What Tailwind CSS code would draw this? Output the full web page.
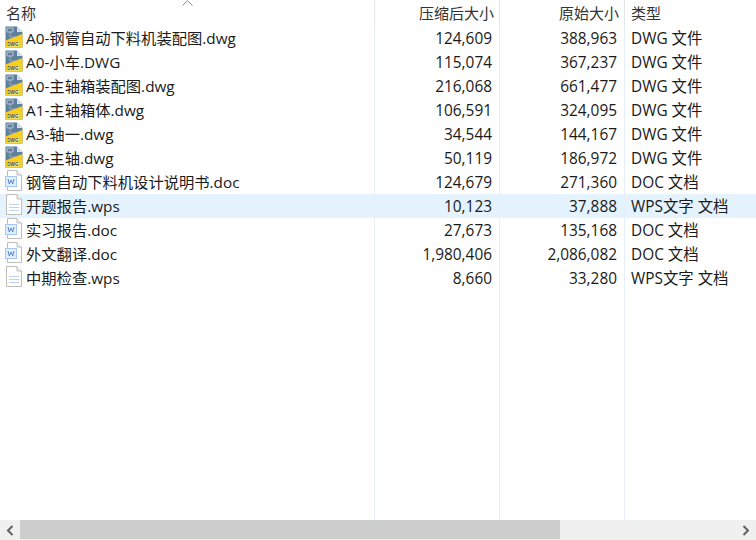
<!DOCTYPE html>
<html lang="zh">
<head>
<meta charset="utf-8">
<script src="https://cdn.jsdelivr.net/npm/@tailwindcss/browser@4"></script>
</head>
<body class="bg-white overflow-hidden">
<svg width="0" height="0" class="absolute">
  <defs>
    <symbol id="dwg" viewBox="0 0 18 22">
      <path d="M0.5 0.5H12L17.5 6V21.5H0.5Z" fill="#5f7f9e"/>
      <path d="M2 2H8V6H2Z" fill="none" stroke="#b9c9d8" stroke-width="1"/>
      <path d="M5 6V11H11" fill="none" stroke="#9fb3c6" stroke-width="1"/>
      <path d="M12 0.5L17.5 6H12Z" fill="#d5dee6"/>
      <path d="M0.5 14.5L17.5 8V21.5H0.5Z" fill="#f7cf1e"/>
      <rect x="2" y="16" width="12" height="4.5" fill="#fcee9c"/>
      <text x="2.3" y="20" font-size="4.6" font-weight="700" font-family="Liberation Sans" fill="#4a4a2a">DWG</text>
    </symbol>
    <symbol id="doc" viewBox="0 0 18 22">
      <path d="M2.5 0.5H12L16.5 5V20.5H2.5Z" fill="#fff" stroke="#bdbdbd"/>
      <path d="M12 0.5V5H16.5" fill="#f2f2f2" stroke="#bdbdbd"/>
      <rect x="0.5" y="6.5" width="11" height="10" fill="#e3eefb" stroke="#a8c6ee"/>
      <path d="M3 9L4.3 14L6 10L7.7 14L9 9" fill="none" stroke="#4d87dc" stroke-width="1"/>
    </symbol>
    <symbol id="wps" viewBox="0 0 18 22">
      <path d="M1.5 0.5H12L16.5 5V20.5H1.5Z" fill="#fff" stroke="#bdbdbd"/>
      <path d="M12 0.5V5H16.5" fill="#f2f2f2" stroke="#bdbdbd"/>
      <path d="M4 10.5H14M4 13.5H14M4 16.5H14" stroke="#bcd2f0" stroke-width="1"/>
    </symbol>
  </defs>
</svg>
<div class="relative w-[756px] h-[540px] flex flex-col font-['Open_Sans','Noto_Sans_CJK_SC',sans-serif] text-[15.4px] text-[#1a1a1a] overflow-hidden">
  <div class="flex-1 relative">
    <!-- header -->
    <div class="relative flex h-[26px] items-center leading-none text-[15px] text-[#333]">
      <svg class="absolute left-[182px] top-0" width="11" height="6" viewBox="0 0 11 6"><path d="M0.5 5.5L5.5 0.8L10.5 5.5" fill="none" stroke="#8a8a8a"/></svg>
      <div class="w-[375px] pl-[6px]">名称</div>
      <div class="w-[125px] pr-[6px] text-right">压缩后大小</div>
      <div class="w-[125px] pr-[6px] text-right">原始大小</div>
      <div class="flex-1 pl-[6px]">类型</div>
    </div>
    <!-- rows -->
    <div class="flex h-6 items-center pt-[2px]"><div class="w-[375px] flex items-center text-[15.3px] -mt-[2px]"><svg class="ml-[5px] mr-[3px] -mt-[2px]" width="18" height="22"><use href="#dwg"/></svg>A0-钢管自动下料机装配图.dwg</div><div class="w-[125px] pr-[8px] text-right">124,609</div><div class="w-[125px] pr-[8px] text-right">388,963</div><div class="flex-1 pl-[6px]">DWG 文件</div></div>
    <div class="flex h-6 items-center pt-[2px]"><div class="w-[375px] flex items-center text-[15.3px] -mt-[2px]"><svg class="ml-[5px] mr-[3px] -mt-[2px]" width="18" height="22"><use href="#dwg"/></svg>A0-小车.DWG</div><div class="w-[125px] pr-[8px] text-right">115,074</div><div class="w-[125px] pr-[8px] text-right">367,237</div><div class="flex-1 pl-[6px]">DWG 文件</div></div>
    <div class="flex h-6 items-center pt-[2px]"><div class="w-[375px] flex items-center text-[15.3px] -mt-[2px]"><svg class="ml-[5px] mr-[3px] -mt-[2px]" width="18" height="22"><use href="#dwg"/></svg>A0-主轴箱装配图.dwg</div><div class="w-[125px] pr-[8px] text-right">216,068</div><div class="w-[125px] pr-[8px] text-right">661,477</div><div class="flex-1 pl-[6px]">DWG 文件</div></div>
    <div class="flex h-6 items-center pt-[2px]"><div class="w-[375px] flex items-center text-[15.3px] -mt-[2px]"><svg class="ml-[5px] mr-[3px] -mt-[2px]" width="18" height="22"><use href="#dwg"/></svg>A1-主轴箱体.dwg</div><div class="w-[125px] pr-[8px] text-right">106,591</div><div class="w-[125px] pr-[8px] text-right">324,095</div><div class="flex-1 pl-[6px]">DWG 文件</div></div>
    <div class="flex h-6 items-center pt-[2px]"><div class="w-[375px] flex items-center text-[15.3px] -mt-[2px]"><svg class="ml-[5px] mr-[3px] -mt-[2px]" width="18" height="22"><use href="#dwg"/></svg>A3-轴一.dwg</div><div class="w-[125px] pr-[8px] text-right">34,544</div><div class="w-[125px] pr-[8px] text-right">144,167</div><div class="flex-1 pl-[6px]">DWG 文件</div></div>
    <div class="flex h-6 items-center pt-[2px]"><div class="w-[375px] flex items-center text-[15.3px] -mt-[2px]"><svg class="ml-[5px] mr-[3px] -mt-[2px]" width="18" height="22"><use href="#dwg"/></svg>A3-主轴.dwg</div><div class="w-[125px] pr-[8px] text-right">50,119</div><div class="w-[125px] pr-[8px] text-right">186,972</div><div class="flex-1 pl-[6px]">DWG 文件</div></div>
    <div class="flex h-6 items-center pt-[2px]"><div class="w-[375px] flex items-center text-[15.3px] -mt-[2px]"><svg class="ml-[5px] mr-[3px] -mt-[2px]" width="18" height="22"><use href="#doc"/></svg>钢管自动下料机设计说明书.doc</div><div class="w-[125px] pr-[8px] text-right">124,679</div><div class="w-[125px] pr-[8px] text-right">271,360</div><div class="flex-1 pl-[6px]">DOC 文档</div></div>
    <div class="flex h-6 items-center pt-[2px] bg-[#e5f3ff]"><div class="w-[375px] flex items-center text-[15.3px] -mt-[2px]"><svg class="ml-[5px] mr-[3px] -mt-[2px]" width="18" height="22"><use href="#wps"/></svg>开题报告.wps</div><div class="w-[125px] pr-[8px] text-right">10,123</div><div class="w-[125px] pr-[8px] text-right">37,888</div><div class="flex-1 pl-[6px]">WPS文字 文档</div></div>
    <div class="flex h-6 items-center pt-[2px]"><div class="w-[375px] flex items-center text-[15.3px] -mt-[2px]"><svg class="ml-[5px] mr-[3px] -mt-[2px]" width="18" height="22"><use href="#doc"/></svg>实习报告.doc</div><div class="w-[125px] pr-[8px] text-right">27,673</div><div class="w-[125px] pr-[8px] text-right">135,168</div><div class="flex-1 pl-[6px]">DOC 文档</div></div>
    <div class="flex h-6 items-center pt-[2px]"><div class="w-[375px] flex items-center text-[15.3px] -mt-[2px]"><svg class="ml-[5px] mr-[3px] -mt-[2px]" width="18" height="22"><use href="#doc"/></svg>外文翻译.doc</div><div class="w-[125px] pr-[8px] text-right">1,980,406</div><div class="w-[125px] pr-[8px] text-right">2,086,082</div><div class="flex-1 pl-[6px]">DOC 文档</div></div>
    <div class="flex h-6 items-center pt-[2px]"><div class="w-[375px] flex items-center text-[15.3px] -mt-[2px]"><svg class="ml-[5px] mr-[3px] -mt-[2px]" width="18" height="22"><use href="#wps"/></svg>中期检查.wps</div><div class="w-[125px] pr-[8px] text-right">8,660</div><div class="w-[125px] pr-[8px] text-right">33,280</div><div class="flex-1 pl-[6px]">WPS文字 文档</div></div>
    <!-- column separators -->
    <div class="absolute left-[374px] top-0 bottom-0 w-px bg-[#e5effa]"></div>
    <div class="absolute left-[499px] top-0 bottom-0 w-px bg-[#e5effa]"></div>
    <div class="absolute left-[624px] top-0 bottom-0 w-px bg-[#e5effa]"></div>
    <div class="absolute left-[374px] top-0 h-[26px] w-px bg-[#e5e5e5]"></div>
    <div class="absolute left-[499px] top-0 h-[26px] w-px bg-[#e5e5e5]"></div>
    <div class="absolute left-[624px] top-0 h-[26px] w-px bg-[#e5e5e5]"></div>
  </div>
  <!-- scrollbar -->
  <div class="flex h-5 bg-[#f0f0f0] items-stretch">
    <div class="w-5 flex items-center justify-center"><svg width="8" height="11" viewBox="0 0 8 11"><path d="M6.5 1L2 5.5L6.5 10" fill="none" stroke="#606060" stroke-width="2"/></svg></div>
    <div class="w-[540px] bg-[#cdcdcd] mb-px"></div>
    <div class="flex-1"></div>
    <div class="w-5 flex items-center justify-center"><svg width="8" height="11" viewBox="0 0 8 11"><path d="M1.5 1L6 5.5L1.5 10" fill="none" stroke="#606060" stroke-width="2"/></svg></div>
  </div>
</div>
</body>
</html>
